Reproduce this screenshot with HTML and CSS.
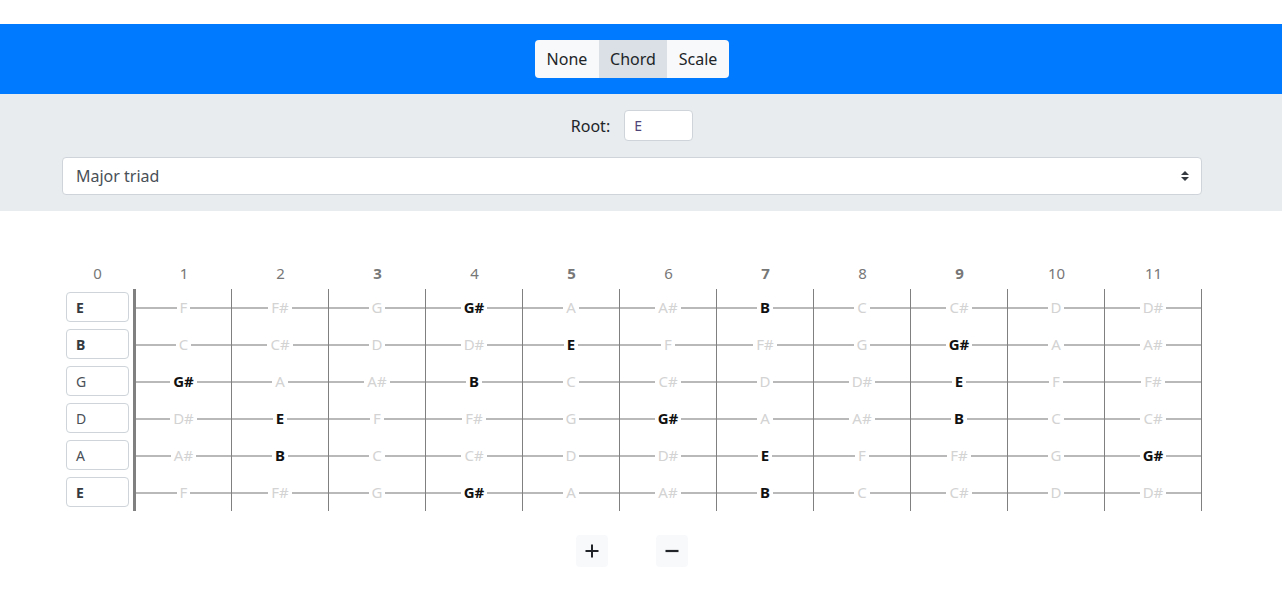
FILE: index.html
```html
<!DOCTYPE html>
<html lang="en">
<head>
<meta charset="utf-8">
<title>Fretboard</title>
<link rel="stylesheet" href="styles.css">
</head>
<body>
<header class="topbar">
  <div class="btn-group">
    <button class="btn btn-none">None</button>
    <button class="btn btn-chord active">Chord</button>
    <button class="btn btn-scale">Scale</button>
  </div>
</header>

<section class="controls">
  <div class="container controls-inner">
    <div class="root-row">
      <label class="root-label" for="root">Root:</label>
      <input id="root" class="root-input" type="text" value="E">
    </div>
    <div class="select">
      <span>Major triad</span>
      <svg class="select-arrow" width="8" height="10" viewBox="0 0 4 5"><path d="M2 0L0 2h4zm0 5L0 3h4z" fill="#343a40"/></svg>
    </div>
  </div>
</section>

<main class="container board-wrap">
  <div class="fret-grid numbers">
    <div class="num open">0</div>
    <div class="num">1</div>
    <div class="num">2</div>
    <div class="num marked">3</div>
    <div class="num">4</div>
    <div class="num marked">5</div>
    <div class="num">6</div>
    <div class="num marked">7</div>
    <div class="num">8</div>
    <div class="num marked">9</div>
    <div class="num">10</div>
    <div class="num">11</div>
  </div>

  <div class="board">
    <div class="fret-grid string">
      <div class="open-cell"><span class="open-btn on">E</span></div>
      <div class="cell"><span class="note">F</span></div>
      <div class="cell"><span class="note">F#</span></div>
      <div class="cell"><span class="note">G</span></div>
      <div class="cell"><span class="note on">G#</span></div>
      <div class="cell"><span class="note">A</span></div>
      <div class="cell"><span class="note">A#</span></div>
      <div class="cell"><span class="note on">B</span></div>
      <div class="cell"><span class="note">C</span></div>
      <div class="cell"><span class="note">C#</span></div>
      <div class="cell"><span class="note">D</span></div>
      <div class="cell"><span class="note">D#</span></div>
    </div>
    <div class="fret-grid string">
      <div class="open-cell"><span class="open-btn on">B</span></div>
      <div class="cell"><span class="note">C</span></div>
      <div class="cell"><span class="note">C#</span></div>
      <div class="cell"><span class="note">D</span></div>
      <div class="cell"><span class="note">D#</span></div>
      <div class="cell"><span class="note on">E</span></div>
      <div class="cell"><span class="note">F</span></div>
      <div class="cell"><span class="note">F#</span></div>
      <div class="cell"><span class="note">G</span></div>
      <div class="cell"><span class="note on">G#</span></div>
      <div class="cell"><span class="note">A</span></div>
      <div class="cell"><span class="note">A#</span></div>
    </div>
    <div class="fret-grid string">
      <div class="open-cell"><span class="open-btn">G</span></div>
      <div class="cell"><span class="note on">G#</span></div>
      <div class="cell"><span class="note">A</span></div>
      <div class="cell"><span class="note">A#</span></div>
      <div class="cell"><span class="note on">B</span></div>
      <div class="cell"><span class="note">C</span></div>
      <div class="cell"><span class="note">C#</span></div>
      <div class="cell"><span class="note">D</span></div>
      <div class="cell"><span class="note">D#</span></div>
      <div class="cell"><span class="note on">E</span></div>
      <div class="cell"><span class="note">F</span></div>
      <div class="cell"><span class="note">F#</span></div>
    </div>
    <div class="fret-grid string">
      <div class="open-cell"><span class="open-btn">D</span></div>
      <div class="cell"><span class="note">D#</span></div>
      <div class="cell"><span class="note on">E</span></div>
      <div class="cell"><span class="note">F</span></div>
      <div class="cell"><span class="note">F#</span></div>
      <div class="cell"><span class="note">G</span></div>
      <div class="cell"><span class="note on">G#</span></div>
      <div class="cell"><span class="note">A</span></div>
      <div class="cell"><span class="note">A#</span></div>
      <div class="cell"><span class="note on">B</span></div>
      <div class="cell"><span class="note">C</span></div>
      <div class="cell"><span class="note">C#</span></div>
    </div>
    <div class="fret-grid string">
      <div class="open-cell"><span class="open-btn">A</span></div>
      <div class="cell"><span class="note">A#</span></div>
      <div class="cell"><span class="note on">B</span></div>
      <div class="cell"><span class="note">C</span></div>
      <div class="cell"><span class="note">C#</span></div>
      <div class="cell"><span class="note">D</span></div>
      <div class="cell"><span class="note">D#</span></div>
      <div class="cell"><span class="note on">E</span></div>
      <div class="cell"><span class="note">F</span></div>
      <div class="cell"><span class="note">F#</span></div>
      <div class="cell"><span class="note">G</span></div>
      <div class="cell"><span class="note on">G#</span></div>
    </div>
    <div class="fret-grid string">
      <div class="open-cell"><span class="open-btn on">E</span></div>
      <div class="cell"><span class="note">F</span></div>
      <div class="cell"><span class="note">F#</span></div>
      <div class="cell"><span class="note">G</span></div>
      <div class="cell"><span class="note on">G#</span></div>
      <div class="cell"><span class="note">A</span></div>
      <div class="cell"><span class="note">A#</span></div>
      <div class="cell"><span class="note on">B</span></div>
      <div class="cell"><span class="note">C</span></div>
      <div class="cell"><span class="note">C#</span></div>
      <div class="cell"><span class="note">D</span></div>
      <div class="cell"><span class="note">D#</span></div>
    </div>
  </div>

  <div class="zoom-row">
    <button class="sq-btn" aria-label="Add fret">
      <svg width="14" height="14" viewBox="0 0 14 14"><path d="M7 0.5v13M0.5 7h13" stroke="#212529" stroke-width="2" fill="none"/></svg>
    </button>
    <button class="sq-btn" aria-label="Remove fret">
      <svg width="14" height="14" viewBox="0 0 14 14"><path d="M0.5 7h13" stroke="#212529" stroke-width="2.2" fill="none"/></svg>
    </button>
  </div>
</main>
</body>
</html>
```

FILE: styles.css
```css
* { box-sizing: border-box; }

html, body {
  margin: 0;
  padding: 0;
  background: #fff;
}

body {
  font-family: "Noto Sans", "Open Sans", sans-serif;
  font-size: 16px;
  color: #212529;
  padding-top: 24px;
}

.container {
  width: 1140px;
  margin-left: 62px;
}

/* top bar */
.topbar {
  background: #007bff;
  height: 70px;
  display: flex;
  justify-content: center;
  align-items: center;
  padding-right: 18px;
}

.btn-group {
  display: flex;
  border-radius: 4px;
  overflow: hidden;
}

.btn {
  font-family: inherit;
  font-size: 16px;
  line-height: 24px;
  height: 38px;
  border: 0;
  margin: 0;
  padding: 0;
  background: #f8f9fa;
  color: #212529;
  text-align: center;
}
.btn-none { width: 64px; }
.btn-chord { width: 68px; }
.btn-scale { width: 62px; }
.btn.active { background: #dae0e5; }

/* controls */
.controls {
  background: #e9ecef;
  padding: 16px 0 16px;
}

.controls-inner {
  display: flex;
  flex-direction: column;
  gap: 16px;
}

.root-row {
  display: flex;
  justify-content: center;
  align-items: center;
  gap: 14px;
}

.root-label {
  font-size: 16px;
  color: #212529;
}

.root-input {
  width: 69px;
  height: 31px;
  border: 1px solid #ced4da;
  border-radius: 4px;
  background: #fff;
  font-family: inherit;
  font-size: 14px;
  color: #4f4478;
  padding: 0 9px;
  margin: 0;
}

.select {
  height: 38px;
  border: 1px solid #ced4da;
  border-radius: 4px;
  background: #fff;
  display: flex;
  align-items: center;
  justify-content: space-between;
  padding: 0 12px 0 13px;
  font-size: 16px;
  color: #495057;
}

.select-arrow { display: block; }

/* fretboard */
.board-wrap {
  padding-top: 51px;
}

.fret-grid {
  display: grid;
  grid-template-columns: 74px 96px repeat(10, 97px);
}

.numbers {
  height: 27px;
}

.num {
  text-align: center;
  font-size: 15px;
  line-height: 22px;
  color: #777;
}
.num.open { padding-right: 3px; }
.num.marked { font-weight: bold; }

.string {
  height: 37px;
}

.open-cell {
  border-right: 3px solid #808080;
  display: flex;
  align-items: flex-start;
  padding: 3px 0 0 4px;
}

.open-btn {
  width: 63px;
  height: 30px;
  border: 1px solid #ced4da;
  border-radius: 4px;
  display: flex;
  align-items: center;
  padding-left: 9px;
  font-size: 14px;
  color: #495057;
}
.open-btn.on { font-weight: bold; color: #343a40; }

.cell {
  border-right: 1px solid #808080;
  display: flex;
  align-items: center;
  justify-content: center;
  padding-bottom: 1px;
  background: linear-gradient(#b9b9b9, #b9b9b9) 0 18px / 100% 2px no-repeat;
}

.note {
  background: #fff;
  padding: 0 3px;
  font-size: 15px;
  line-height: 20px;
  color: #d3d3d3;
}
.note.on {
  color: #111;
  font-weight: bold;
}

.zoom-row {
  display: flex;
  justify-content: center;
  gap: 48px;
  padding-top: 24px;
}

.sq-btn {
  width: 32px;
  height: 32px;
  border: 0;
  border-radius: 4px;
  background: #f8f9fa;
  padding: 0;
  margin: 0;
  display: flex;
  align-items: center;
  justify-content: center;
}
.sq-btn svg { display: block; }
```
